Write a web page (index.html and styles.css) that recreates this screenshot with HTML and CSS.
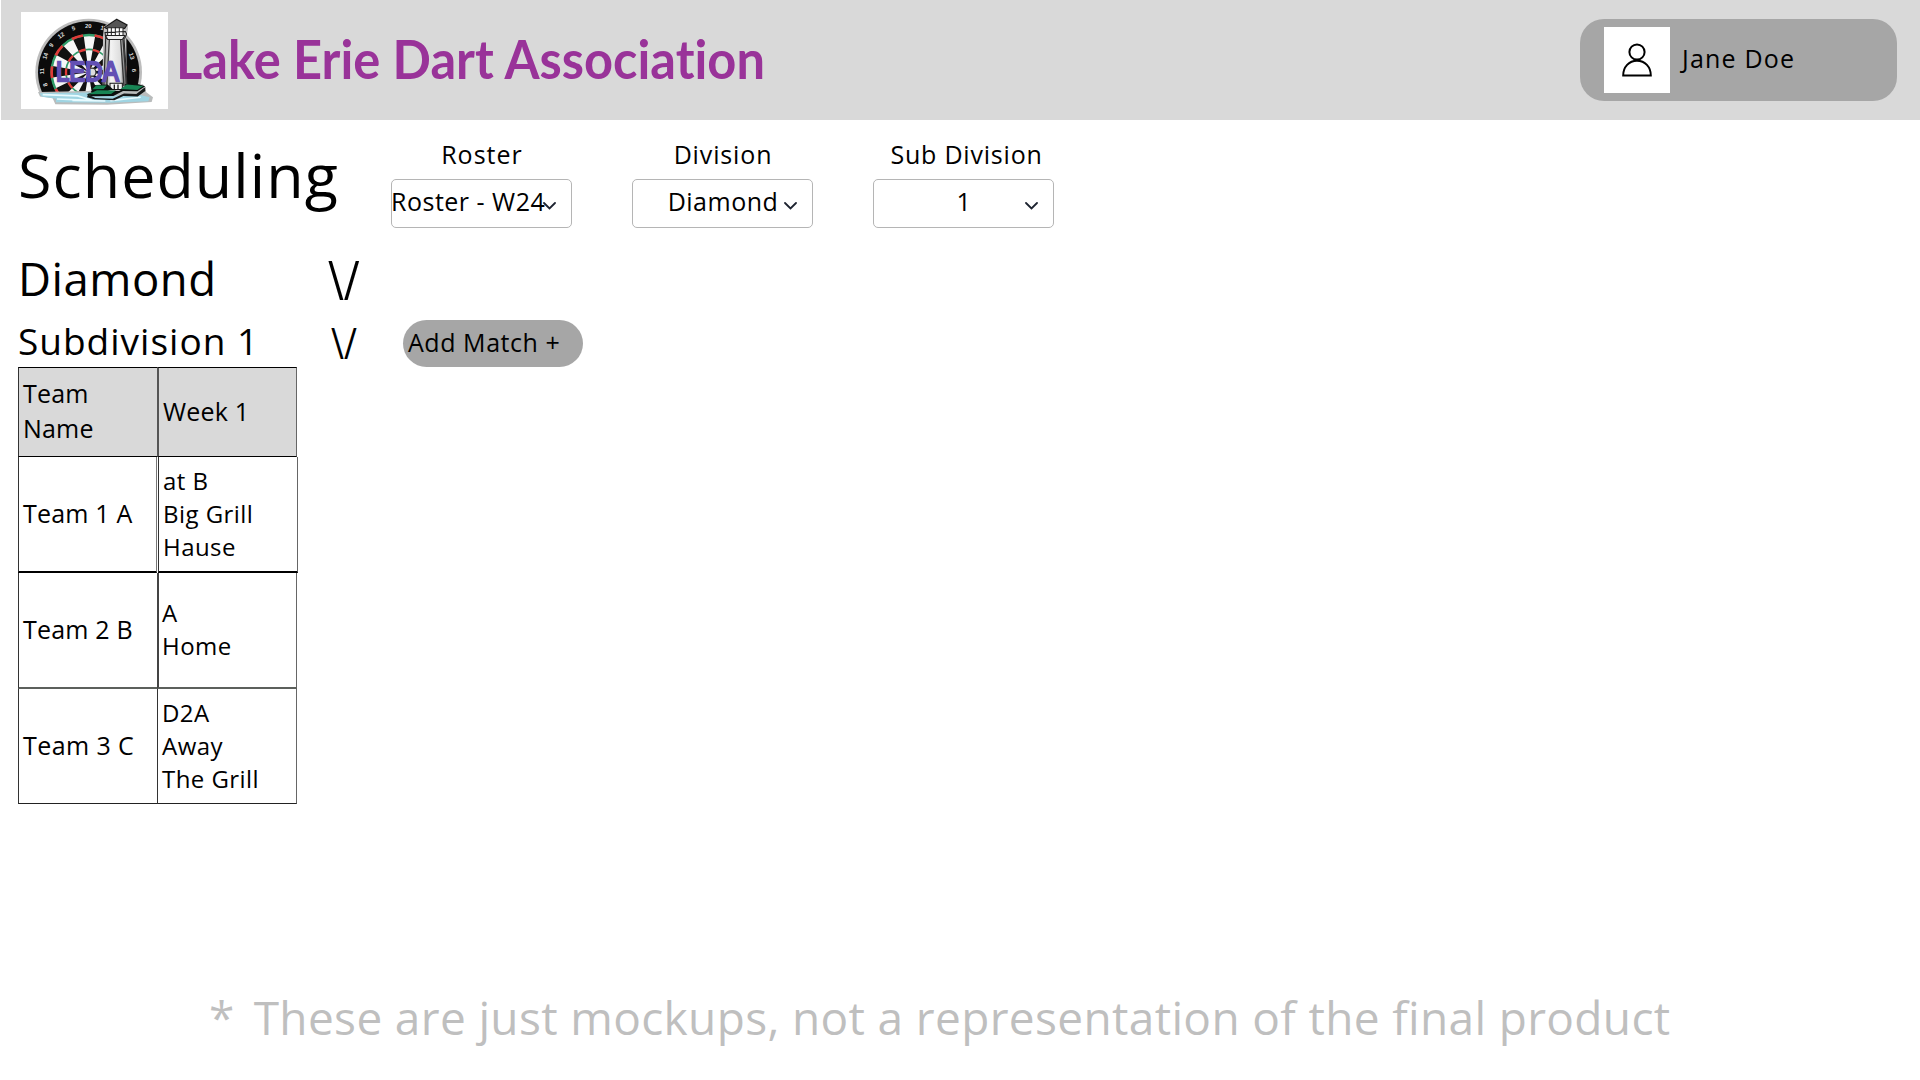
FILE: index.html
```
<!DOCTYPE html>
<html lang="en">
<head>
<meta charset="utf-8">
<title>Lake Erie Dart Association</title>
<link rel="stylesheet" href="styles.css">
</head>
<body>
<header class="topbar">
  <svg class="logo" viewBox="63 33 441 290" preserveAspectRatio="none" aria-label="LEDA logo">
    <defs>
      <clipPath id="board-clip"><rect x="63" y="33" width="441" height="247"/></clipPath>
      <linearGradient id="tower" x1="0" x2="1"><stop offset="0" stop-color="#777"/><stop offset=".3" stop-color="#f4f4f4"/><stop offset=".7" stop-color="#ddd"/><stop offset="1" stop-color="#444"/></linearGradient>
    </defs>
    <rect x="63" y="33" width="441" height="290" fill="#fff"/>
    <g clip-path="url(#board-clip)">
      <circle cx="266" cy="213" r="160" fill="#bdbdbd"/>
      <circle cx="266" cy="213" r="152" fill="#0b0b0b"/>
      <circle cx="266" cy="213" r="113" fill="#f6f6f6"/>
      <g fill="none" transform="rotate(-9 266 213)">
        <circle cx="266" cy="213" r="55" stroke="#111" stroke-width="110" pathLength="20" stroke-dasharray="1 1"/>
        <circle cx="266" cy="213" r="111" stroke="#2f9a68" stroke-width="7"/>
        <circle cx="266" cy="213" r="111" stroke="#e03a38" stroke-width="8" pathLength="20" stroke-dasharray="1 1"/>
        <circle cx="266" cy="213" r="68" stroke="#2f9a68" stroke-width="5"/>
        <circle cx="266" cy="213" r="68" stroke="#e03a38" stroke-width="7" pathLength="20" stroke-dasharray="1 1"/>
      </g>
      <circle cx="276" cy="213" r="12" fill="#ddd" stroke="#333" stroke-width="4"/>
      <g class="board-numbers">
        <text x="265" y="80">20</text>
        <text x="221" y="88" transform="rotate(-18 221 84)">5</text>
        <text x="184" y="109" transform="rotate(-36 184 104)">12</text>
        <text x="155" y="138" transform="rotate(-54 155 133)">9</text>
        <text x="137" y="170" transform="rotate(-72 137 165)">14</text>
        <text x="128" y="215" transform="rotate(-90 128 210)">11</text>
        <text x="137" y="255" transform="rotate(-108 137 250)">8</text>
        <text x="306" y="86" transform="rotate(18 306 82)">1</text>
        <text x="394" y="170" transform="rotate(72 394 165)">13</text>
        <text x="401" y="213" transform="rotate(90 401 208)">6</text>
      </g>
    </g>
    <path d="M309 104l3-28 38-24 34 18v14l-5 24 1 156h-72z" fill="#c2c2c2"/>
    <path d="M317 112h55l10 150h-71z" fill="url(#tower)" stroke="#222" stroke-width="3"/>
    <path d="M328 116l-8 142M362 116l10 142M369 116l11 140" stroke="#333" stroke-width="4" fill="none"/>
    <path d="M314 79l36-24 31 17-7 10-52 2z" fill="#555" stroke="#111" stroke-width="3"/>
    <path d="M323 80h46v23h-46z" fill="#fff" stroke="#222" stroke-width="3"/>
    <path d="M334 80v23M346 78v25M358 80v23M315 94l61-3 4 8-5 12-58-2z" stroke="#222" stroke-width="3" fill="none"/>
    <path d="M317 103h58l-8 12h-44z" fill="#eee" stroke="#222" stroke-width="3"/>
    <text class="logo-word" x="168" y="239" textLength="188" lengthAdjust="spacingAndGlyphs">LEDA</text>
    <path d="M114 272l150-3 74-11 91-9 10 24 20 15-4 14-134 8-155-1-8-18-38-5z" fill="#b9bcbc"/>
    <path d="M119 276l150-2 15 12 130-6 35 8-4 12-119 4-158-1v-11l-43-6z" fill="#9fd4e2"/>
    <path d="M128 280l105 4 43 13-105-4M331 298l91-10M217 297l99 2" stroke="#e8fbff" stroke-width="5" fill="none"/>
    <path d="M330 246h37v19h-37z" fill="#f3f3f3" stroke="#111" stroke-width="3"/>
    <path d="M343 250v14M354 250v14" stroke="#222" stroke-width="4"/>
    <path d="M286 251l37-1 16 14-27 9h-40zM260 279l34-11 63 1 22-11-5-9 31-3 31 9-24 15-43-1-29 15-66 1z" fill="#0b0f0d"/>
    <path d="M264 280l22 10 52 2 34-15 37 1 27-21v12l-23 17-43-2-27 13-60-3-22-6z" fill="#161919"/>
    <path d="M289 252l31 1-9 10-34 1zM291 267l57 1-15 10-68 1zM380 250l50 4-18 12-50-3z" fill="#188554"/>
  </svg>
  <div class="brand">Lake Erie Dart Association</div>
  <div class="user">
    <span class="avatar">
      <svg class="avatar-icon" viewBox="0 0 30 34"><circle cx="15" cy="9" r="7.6"/><path d="M1.2 32.4C1.2 23.8 7 17.7 15 17.7S28.800 23.800 28.800 32.400Z"/></svg>
    </span>
    <span class="user-name">Jane Doe</span>
  </div>
</header>

<main class="page">
  <div class="toolbar">
    <h1 class="title">Scheduling</h1>
    <div class="field">
      <span class="label label-roster">Roster</span>
      <div class="select"><span class="value value-roster">Roster - W24</span><svg class="chevron" viewBox="0 0 13 8"><path d="M1 1l5.500 5.500L12 1"/></svg></div>
    </div>
    <div class="field">
      <span class="label">Division</span>
      <div class="select"><span class="value">Diamond</span><svg class="chevron" viewBox="0 0 13 8"><path d="M1 1l5.500 5.500L12 1"/></svg></div>
    </div>
    <div class="field">
      <span class="label label-sub">Sub Division</span>
      <div class="select"><span class="value">1</span><svg class="chevron" viewBox="0 0 13 8"><path d="M1 1l5.500 5.500L12 1"/></svg></div>
    </div>
  </div>

  <div class="division">
    <h2 class="division-name">Diamond</h2>
    <span class="toggle">\/</span>
  </div>

  <div class="subdivision">
    <h3 class="subdivision-name">Subdivision 1</h3>
    <span class="toggle toggle-small">\/</span>
    <button class="add-match">Add Match +</button>
  </div>

  <div class="schedule">
    <div class="row row-head"><div class="cell cell-team">Team<br>Name</div><div class="cell cell-week">Week 1</div></div>
    <div class="row row-first"><div class="cell cell-team">Team 1 A</div><div class="cell cell-match">at B<br>Big Grill<br>Hause</div></div>
    <div class="row row-second"><div class="cell cell-team">Team 2 B</div><div class="cell cell-match">A<br>Home</div></div>
    <div class="row row-third"><div class="cell cell-team cell-last">Team 3 C</div><div class="cell cell-match">D2A<br>Away<br>The Grill</div></div>
  </div>
</main>

<footer class="note"><span>*</span><span>These are just mockups, not a representation of the final product</span></footer>
</body>
</html>
```
FILE: styles.css
```
* { box-sizing: border-box; }
body {
  margin: 0;
  height: 1080px;
  display: flex;
  flex-direction: column;
  overflow: hidden;
  background: #fff;
  color: #000;
  font-family: "Open Sans", sans-serif;
  font-size: 25px;
}
h1, h2, h3 { margin: 0; font-weight: 400; }

.topbar {
  flex: none;
  height: 120px;
  margin-left: 1px;
  padding: 0 23px 0 20px;
  display: flex;
  align-items: center;
  background: #d9d9d9;
}
.logo { width: 147px; height: 97px; flex: none; }
.board-numbers { fill: #ddd; font: 700 18px "Liberation Sans", sans-serif; text-anchor: middle; }
.logo-word {
  fill: #6350b4;
  stroke: #6350b4;
  stroke-width: 7px;
  font: 400 82px "Liberation Sans", sans-serif;
}
.brand {
  width: 620px;
  margin-left: 8px;
  padding-bottom: 2px;
  font: 700 54px/80px Lato, sans-serif;
  font-variant-ligatures: none;
  color: #993399;
  white-space: nowrap;
  transform: scaleX(.937);
  transform-origin: 0 50%;
}
.user {
  width: 317px;
  height: 82px;
  margin-left: auto;
  padding-left: 24px;
  display: flex;
  align-items: center;
  border-radius: 24px;
  background: #a6a6a6;
}
.avatar {
  width: 66px;
  height: 66px;
  display: flex;
  align-items: center;
  justify-content: center;
  background: #fff;
}
.avatar-icon { width: 30px; height: 34px; fill: none; stroke: #000; stroke-width: 2; }
.user-name { margin-left: 12px; line-height: 36px; letter-spacing: 1.2px; padding-bottom: 4px; }

.page { padding-left: 18px; }
.toolbar { display: flex; height: 126px; }
.title { width: 373px; font-size: 61px; line-height: 110px; letter-spacing: 1.04px; }
.field { width: 181px; margin-right: 60px; padding-top: 20px; text-align: center; }
.label { display: block; line-height: 29px; letter-spacing: .86px; padding-left: 1px; }
.label-roster { letter-spacing: 1.03px; }
.label-sub { letter-spacing: .79px; padding-left: 6px; }
.select {
  height: 49px;
  margin-top: 10px;
  padding-right: 14px;
  display: flex;
  align-items: center;
  border: 1px solid #b5b5b5;
  border-radius: 5px;
}
.value { width: 118px; margin: 0 2px 0 31px; line-height: 42px; padding-bottom: 5px; white-space: nowrap; letter-spacing: .5px; }
.value-roster { margin-left: -1px; width: 150px; text-align: left; letter-spacing: .5px; }
.chevron { width: 13px; height: 8px; margin-top: 5px; flex: none; fill: none; stroke: #1d2330; stroke-width: 1.8; stroke-linecap: round; }

.division { display: flex; height: 74px; }
.division-name { width: 310px; font-size: 45.5px; line-height: 65px; letter-spacing: .5px; }
.toggle { font-size: 54px; line-height: 67px; transform: scaleX(.8); transform-origin: 0 50%; }

.subdivision { display: flex; height: 47px; }
.subdivision-name { width: 313px; font-size: 37px; line-height: 41px; letter-spacing: 1px; }
.toggle-small { width: 72px; font-size: 44px; line-height: 44px; }
.add-match {
  width: 180px;
  height: 47px;
  padding: 0 0 3px 5px;
  border: 0;
  border-radius: 24px;
  background: #a6a6a6;
  color: #000;
  font: inherit;
  letter-spacing: .55px;
  text-align: left;
}

.schedule { width: 279px; }
.row { display: grid; grid-template-columns: 139px 140px; }
.cell {
  display: flex;
  align-items: center;
  padding: 0 0 2px 4px;
  border-left: 1px solid #333;
  border-bottom: 1px solid #222;
}
.cell + .cell { border-right: 1px solid #666; }
.cell-team { line-height: 35px; letter-spacing: .2px; }
.cell-match { font-size: 24px; line-height: 33px; letter-spacing: .45px; }
.row-head { height: 90px; }
.row-head .cell { background: #d9d9d9; border-top: 1px solid #000; border-bottom-color: #000; }
.row-head .cell-week { border-left: 2px solid #555; letter-spacing: .2px; }
.row-first { height: 116px; grid-template-columns: 140px 140px; }
.row-first .cell { border-bottom: 2px solid #000; }
.row-first .cell-team { border-right: 1px solid #777; margin-right: 1px; }
.row-second { height: 116px; }
.row-second .cell { border-bottom: 2px solid #5c605c; }
.row-second .cell-match { border-left: 2px solid #444; padding-left: 3px; }
.row-third { height: 115px; }
.cell-last { letter-spacing: .41px; }

.note {
  display: flex;
  gap: 19px;
  margin-top: auto;
  padding: 0 0 28px 209px;
  font-size: 46px;
  line-height: 70px;
  letter-spacing: .35px;
  font-variant-ligatures: none;
  color: #bfbfbf;
  white-space: nowrap;
}
```
